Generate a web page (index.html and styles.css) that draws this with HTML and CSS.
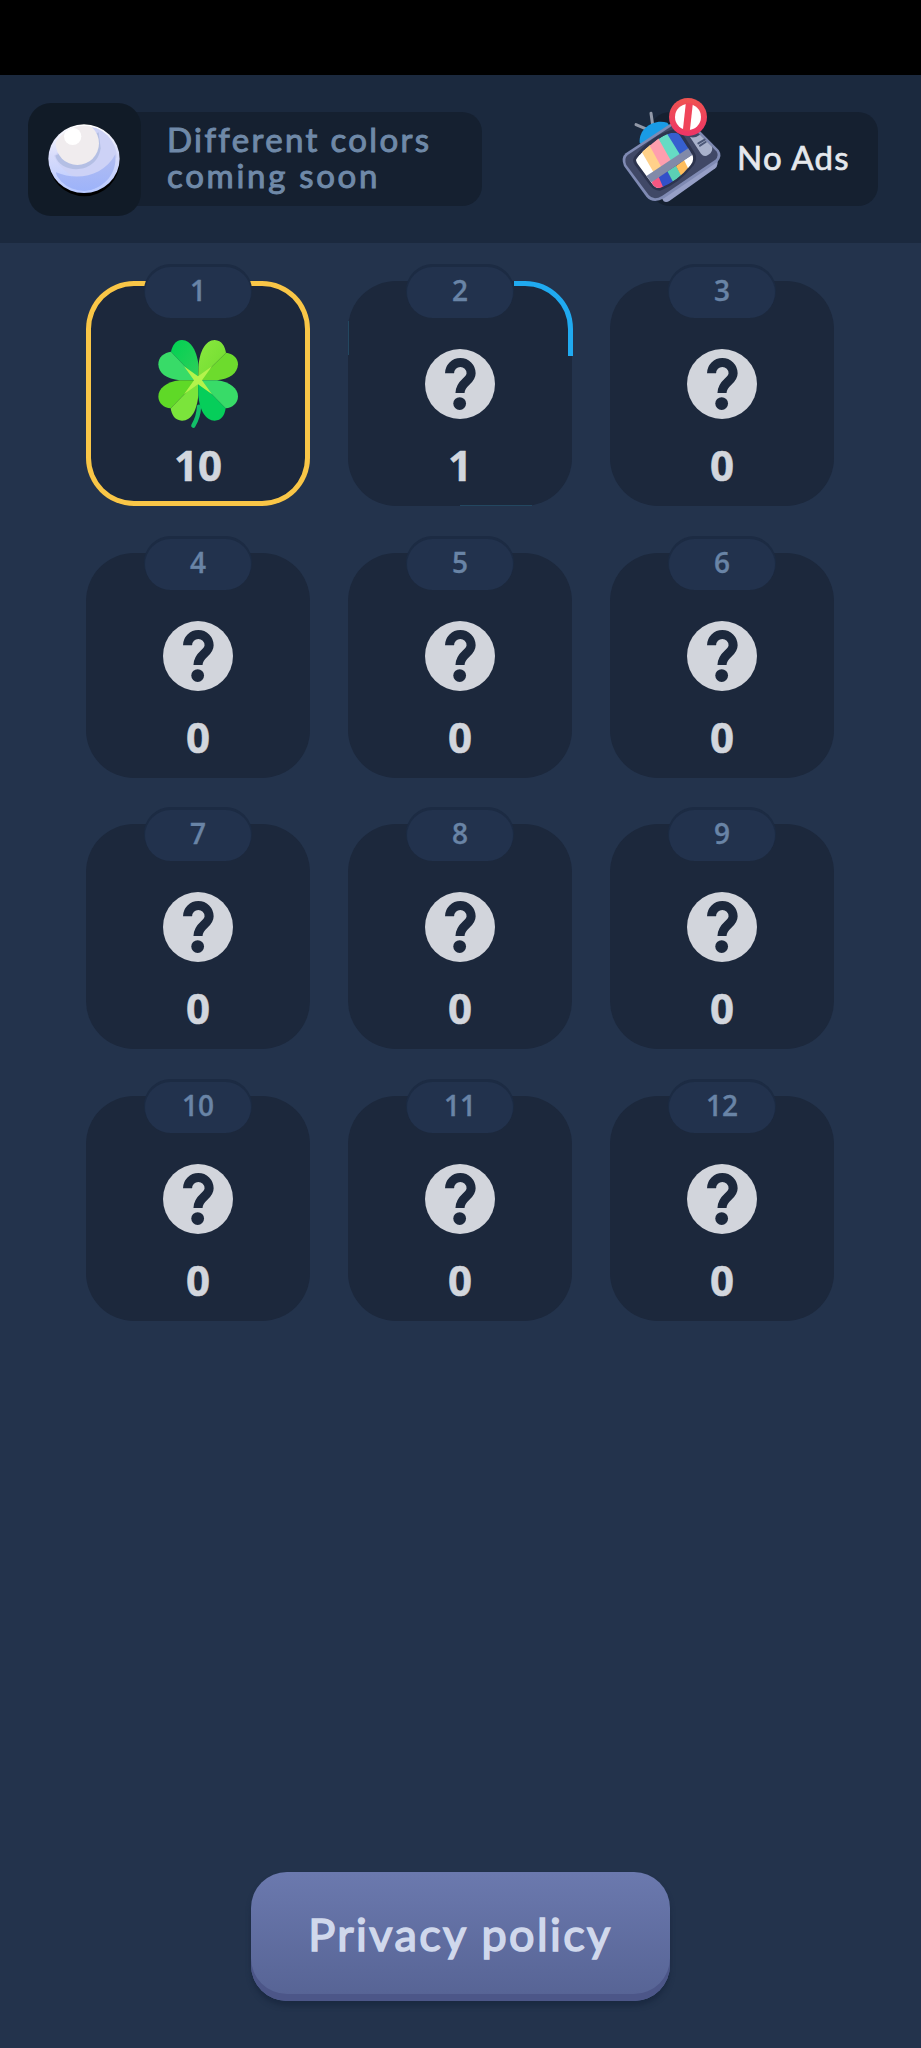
FILE: index.html
```html
<!DOCTYPE html>
<html lang="en">
<head>
<meta charset="utf-8">
<title>Collection</title>
<link rel="stylesheet" href="styles.css">
</head>
<body>
<svg class="defs" width="0" height="0">
  <symbol id="question" viewBox="263 298 208 208">
    <circle cx="367" cy="402" r="104" fill="#d2d5dc"/>
    <path d="M336 370 A32 32 0 1 1 400 370 C400 395 367 396 367 429" fill="none" stroke="#1c283c" stroke-width="27"/>
    <circle cx="366" cy="460" r="19" fill="#1c283c"/>
  </symbol>
</svg>
<div class="status"></div>
<header class="header">
  <div class="orb-tile">
    <svg width="80" height="80" viewBox="42 70 240 240">
      <defs>
        <linearGradient id="orb" x1="0" y1="0" x2="0" y2="1"><stop offset="0" stop-color="#fff"/><stop offset=".45" stop-color="#d8dcfb"/><stop offset="1" stop-color="#b8c9ff"/></linearGradient>
        <linearGradient id="shade" x1="0" y1="0" x2="0" y2="1"><stop offset="0" stop-color="#b2bdf1"/><stop offset="1" stop-color="#9db3fa"/></linearGradient>
        <clipPath id="ball"><circle cx="163" cy="188" r="98"/></clipPath>
      </defs>
      <ellipse cx="163" cy="194" rx="107" ry="108" fill="#000"/>
      <ellipse cx="162" cy="189" rx="107" ry="103" fill="url(#orb)"/>
      <g clip-path="url(#ball)">
        <path d="M185 95 C275 100 290 175 252 190 C225 270 110 270 72 180Z" fill="#cdd2f6"/>
        <path d="M78 230 C140 256 220 244 256 176 C268 300 85 325 78 230Z" fill="url(#shade)"/>
        <path d="M76 180 C90 235 200 240 212 158 L206 110Z" fill="#b4bfe4"/>
        <circle cx="142" cy="143" r="65" fill="#f0ecee"/>
        <circle cx="128" cy="122" r="26" fill="#fff"/>
      </g>
    </svg>
  </div>
  <div class="notice"><span class="l1">Different colors</span><span class="l2">coming soon</span></div>
  <div class="ads">
    <svg class="tv" width="120" height="120" viewBox="0 0 360 360">
      <defs>
        <linearGradient id="ban" x1="0" y1="0" x2="0" y2="1"><stop offset="0" stop-color="#ef5350"/><stop offset="1" stop-color="#ee3566"/></linearGradient>
        <clipPath id="screen"><path d="M84 205 Q130 145 187 129 Q205 125 214 138 L250 194 Q257 210 245 225 Q205 275 153 294 Q139 296 130 282 L86 222 Q79 212 84 205Z"/></clipPath>
      </defs>
      <path d="M81 104 L116 119 M126 70 L131 105" stroke="#9299a8" stroke-width="9" stroke-linecap="round"/>
      <path d="M92 158 C88 115 135 85 175 98 L185 112 L96 162Z" fill="#199be5"/>
      <path d="M157 322 L164 334 Q172 339 182 332 L319 235 Q329 226 325 204Z" fill="#969fc6"/>
      <path d="M50 190 L198 92 Q226 76 246 96 L329 180 Q341 197 326 215 L165 325 Q132 343 112 320 L45 228 Q35 203 50 190Z" fill="#7f8ab3"/>
      <path d="M56 195 L202 99 Q224 86 240 101 L322 184 Q332 197 319 209 L160 317 Q134 333 119 315 L52 225 Q44 206 56 195Z" fill="#404866"/>
      <path d="M76 200 Q128 136 188 119 Q209 115 223 134 L258 190 Q267 207 254 226 Q210 281 154 302 Q137 304 122 285 L78 226 Q68 212 76 200Z" fill="#2d344e"/>
      <g clip-path="url(#screen)">
        <path d="M60 180 L94 196 L155 300 L80 300Z" fill="#fff"/>
        <path d="M79 210 L104 180 L149 243 L124 264Z" fill="#fff"/>
        <path d="M98 185 L124 164 L172 232 L138 254Z" fill="#ffd18a"/>
        <path d="M122 167 L149 145 L197 219 L162 240Z" fill="#ff9eae"/>
        <path d="M149 147 L176 129 L224 200 L191 221Z" fill="#66dbc4"/>
        <path d="M175 133 L204 108 L265 172 L219 203Z" fill="#365fcf"/>
        <path d="M128 276 L153 255 L168 304 L137 306Z" fill="#f65782"/>
        <path d="M149 260 L175 244 L193 274 L165 298Z" fill="#3250c9"/>
        <path d="M175 244 L201 227 L218 257 L192 275Z" fill="#5bd0b5"/>
        <path d="M201 228 L229 207 L245 237 L217 259Z" fill="#ffbd5c"/>
        <path d="M225 210 L260 187 L260 218 L238 236Z" fill="#fff"/>
        <path d="M111 259 L248 168 L261 187 L123 280Z" fill="#818aa9"/>
      </g>
      <path d="M243 141 Q257 146 273 134 L309 170 Q313 185 298 194 Q286 203 276 191Z" fill="#a9b2cc"/>
      <path d="M268 160 L287 149 M273 167 L290 156" stroke="#4c5878" stroke-width="6" stroke-linecap="round"/>
      <circle cx="237" cy="81" r="57" fill="url(#ban)"/>
      <circle cx="237" cy="81" r="39" fill="#fff"/>
      <path d="M241 40 L232 122" stroke="#f04459" stroke-width="21"/>
    </svg>
    <span>No Ads</span>
  </div>
</header>
<main class="grid">
  <div class="card done"><b class="tag">1</b>
    <svg class="clover" width="86" height="94" viewBox="256 258 258 282">
      <defs>
        <linearGradient id="g1" x1="0" y1="0" x2="1" y2="1"><stop offset="0" stop-color="#00d153"/><stop offset="1" stop-color="#30cf5a"/></linearGradient>
        <linearGradient id="g2" x1="0" y1="0" x2="1" y2="1"><stop offset="0" stop-color="#8ae83e"/><stop offset="1" stop-color="#6fdc30"/></linearGradient>
      </defs>
      <path d="M388 470 Q387 500 371 527" fill="none" stroke="#12bf68" stroke-width="13" stroke-linecap="round"/>
      <path d="M385 391 L387 350 C383 305 364 270 337 270 C317 270 308 288 304 305Z" fill="url(#g1)"/>
      <path d="M385 391 L304 305 C284 308 266 320 266 343 C266 370 292 387 330 391Z" fill="#38db68"/>
      <path d="M385 391 L387 350 C389 305 408 270 435 270 C457 271 466 290 469 308Z" fill="url(#g2)"/>
      <path d="M385 391 L469 308 C489 311 505 323 505 343 C504 370 480 387 442 391Z" fill="#6ddb2d"/>
      <path d="M385 391 L386 435 C382 480 366 512 337 512 C316 512 306 495 303 475Z" fill="#7be43b"/>
      <path d="M385 391 L330 391 C290 396 266 415 266 440 C267 460 282 473 303 475Z" fill="#5fd927"/>
      <path d="M385 391 L386 435 C389 480 408 512 435 512 C455 512 465 496 468 475Z" fill="#06ce5a"/>
      <path d="M385 391 L442 391 C481 396 505 415 505 440 C504 460 488 473 468 475Z" fill="#38db68"/>
      <path d="M343 349 L385 379 L427 349 L397 391 L427 433 L385 403 L343 433 L373 391Z" fill="#b4f34c"/>
    </svg>
    <span class="count">10</span></div>
  <div class="card"><b class="tag">2</b>
    <svg class="progress" width="225" height="225" viewBox="0 0 225 225" fill="none"><path d="M166 2.5 H177 A45.5 45.5 0 0 1 222.5 48 V75" stroke="#20aaf0" stroke-width="5"/><path d="M.5 40 V74 M112 224.5 H184" stroke="#234760"/></svg>
    <svg class="q"><use href="#question"/></svg><span class="count">1</span></div>
  <div class="card"><b class="tag">3</b><svg class="q"><use href="#question"/></svg><span class="count">0</span></div>
  <div class="card"><b class="tag">4</b><svg class="q"><use href="#question"/></svg><span class="count">0</span></div>
  <div class="card"><b class="tag">5</b><svg class="q"><use href="#question"/></svg><span class="count">0</span></div>
  <div class="card"><b class="tag">6</b><svg class="q"><use href="#question"/></svg><span class="count">0</span></div>
  <div class="card"><b class="tag">7</b><svg class="q"><use href="#question"/></svg><span class="count">0</span></div>
  <div class="card"><b class="tag">8</b><svg class="q"><use href="#question"/></svg><span class="count">0</span></div>
  <div class="card"><b class="tag">9</b><svg class="q"><use href="#question"/></svg><span class="count">0</span></div>
  <div class="card"><b class="tag">10</b><svg class="q"><use href="#question"/></svg><span class="count">0</span></div>
  <div class="card"><b class="tag">11</b><svg class="q"><use href="#question"/></svg><span class="count">0</span></div>
  <div class="card"><b class="tag">12</b><svg class="q"><use href="#question"/></svg><span class="count">0</span></div>
</main>
<button class="privacy">Privacy policy</button>
</body>
</html>
```
FILE: styles.css
```css
* { box-sizing: border-box; }
body {
  margin: 0;
  height: 2048px;
  background: #23334c;
  font-family: Lato, "Open Sans", sans-serif;
  display: flex;
  flex-direction: column;
  overflow: hidden;
}
svg { display: block; flex: none; }
.defs { height: 0; }
.status { height: 75px; background: #000; flex: none; }
.header {
  height: 168px;
  flex: none;
  background: #1b293e;
  display: flex;
  padding: 28px 43px 0 28px;
}
.orb-tile {
  width: 113px;
  height: 113px;
  border-radius: 23px;
  background: #111b27;
  padding: 16px 16px;
  z-index: 1;
}
.notice {
  width: 361px;
  height: 94px;
  margin: 9px 0 0 -20px;
  padding: 9px 0 0 46px;
  border-radius: 0 20px 20px 0;
  background: #152030;
  color: #6f89a8;
  font-size: 33px;
  line-height: 36px;
  font-weight: 400;
  -webkit-text-stroke: 1px #6f89a8;
  white-space: nowrap;
}
.notice span { display: block; }
.l1 { letter-spacing: 2.35px; }
.l2 { letter-spacing: 2.7px; }
.ads {
  width: 228px;
  height: 94px;
  margin: 9px 0 0 auto;
  border-radius: 20px;
  background: #152030;
  display: flex;
  color: #e5e8ed;
  font-size: 33px;
  line-height: 91px;
  letter-spacing: 1.2px;
  white-space: nowrap;
  -webkit-text-stroke: .7px #e5e8ed;
}
.tv { margin: -22px 8px 0 -41px; }
.grid {
  display: grid;
  grid-template-columns: repeat(3, 224px);
  grid-auto-rows: 225px;
  gap: 46.6px 38px;
  padding: 38px 0 0 86px;
}
.card {
  position: relative;
  border-radius: 48px;
  background: #1c283c;
  display: flex;
  flex-direction: column;
  align-items: center;
  padding-top: 68px;
}
.done { box-shadow: inset 0 0 0 5px #f9c647; padding-top: 55px; }
.tag {
  position: absolute;
  top: -14px;
  left: 59px;
  width: 106px;
  height: 51px;
  border-radius: 26px;
  background: #22324d;
  box-shadow: 0 -2px 0 1px #1c2b43;
  color: #6984a6;
  font: 600 28px "Open Sans", sans-serif;
  line-height: 47px;
  -webkit-text-stroke: .3px #6984a6;
  text-align: center;
  z-index: 1;
}
.progress { position: absolute; left: 0; top: 0; }
.q { width: 70px; height: 70px; }
.count {
  margin-top: 20px;
  font: 700 42px "Open Sans", sans-serif;
  line-height: 51px;
  color: #d2d6dd;
  -webkit-text-stroke: .5px #d2d6dd;
}
.done .count { margin-top: 9px; }
.privacy {
  width: 419px;
  height: 129px;
  margin: auto auto 47px 251px;
  flex: none;
  padding: 0 0 5px;
  border: 0;
  border-radius: 36px;
  background: linear-gradient(#6b79ae, #566394);
  box-shadow: inset 0 -7px 0 #4c5688, 0 5px 5px #1b2a42;
  color: #d0d8ec;
  font: 400 45px Lato, "Open Sans", sans-serif;
  letter-spacing: 2.4px;
  -webkit-text-stroke: 1.6px #d0d8ec;
}
```
